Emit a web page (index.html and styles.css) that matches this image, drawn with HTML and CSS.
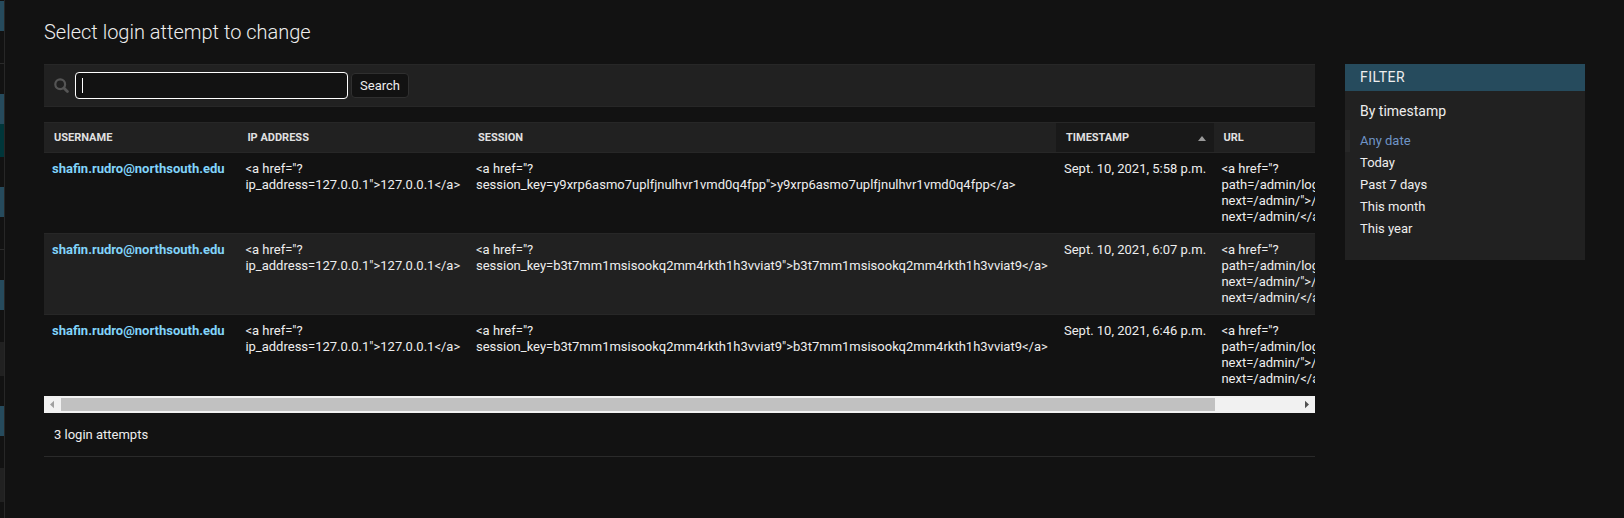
FILE: index.html
```html
<!DOCTYPE html>
<html lang="en">
<head>
<meta charset="utf-8">
<title>Select login attempt to change</title>
<link rel="stylesheet" href="styles.css">
</head>
<body>
<div class="layout">
  <nav class="sidebar">
    <div class="caption"></div>
    <div class="item tall"></div>
    <div class="item"></div>
    <div class="caption"></div>
    <div class="item current"></div>
    <div class="item"></div>
    <div class="caption"></div>
    <div class="item tall"></div>
    <div class="item"></div>
    <div class="caption"></div>
    <div class="item gap"></div>
    <div class="item alt"></div>
    <div class="item"></div>
    <div class="caption"></div>
    <div class="item gap"></div>
    <div class="item alt"></div>
  </nav>
  <main class="content">
    <h1>Select login attempt to change</h1>
    <div class="columns">
      <div class="changelist">
        <form class="toolbar">
          <svg class="loupe" viewBox="0 0 15 15"><circle cx="6.2" cy="6.2" r="4.9" fill="none" stroke="#555" stroke-width="2.2"/><path d="M9.9 9.9L13.4 13.4" stroke="#555" stroke-width="2.8" stroke-linecap="round"/></svg>
          <div class="searchbar"><span class="caret"></span></div>
          <button type="button">Search</button>
        </form>
        <div class="results">
          <table>
            <colgroup><col class="c-user"><col class="c-ip"><col class="c-session"><col class="c-time"><col class="c-url"></colgroup>
            <thead><tr><th>Username</th><th>IP address</th><th>Session</th><th class="sorted"><div class="sort"><span>Timestamp</span><i class="arrow"></i></div></th><th>URL</th></tr></thead>
            <tbody>
              <tr><th>shafin.rudro@northsouth.edu</th><td>&lt;a href="?<br>ip_address=127.0.0.1"&gt;127.0.0.1&lt;/a&gt;</td><td>&lt;a href="?<br>session_key=y9xrp6asmo7uplfjnulhvr1vmd0q4fpp"&gt;y9xrp6asmo7uplfjnulhvr1vmd0q4fpp&lt;/a&gt;</td><td>Sept. 10, 2021, 5:58 p.m.</td><td>&lt;a href="?<br>path=/admin/login/?<br>next=/admin/"&gt;/admin/login/?<br>next=/admin/&lt;/a&gt;</td></tr>
              <tr><th>shafin.rudro@northsouth.edu</th><td>&lt;a href="?<br>ip_address=127.0.0.1"&gt;127.0.0.1&lt;/a&gt;</td><td>&lt;a href="?<br>session_key=b3t7mm1msisookq2mm4rkth1h3vviat9"&gt;b3t7mm1msisookq2mm4rkth1h3vviat9&lt;/a&gt;</td><td>Sept. 10, 2021, 6:07 p.m.</td><td>&lt;a href="?<br>path=/admin/login/?<br>next=/admin/"&gt;/admin/login/?<br>next=/admin/&lt;/a&gt;</td></tr>
              <tr><th>shafin.rudro@northsouth.edu</th><td>&lt;a href="?<br>ip_address=127.0.0.1"&gt;127.0.0.1&lt;/a&gt;</td><td>&lt;a href="?<br>session_key=b3t7mm1msisookq2mm4rkth1h3vviat9"&gt;b3t7mm1msisookq2mm4rkth1h3vviat9&lt;/a&gt;</td><td>Sept. 10, 2021, 6:46 p.m.</td><td>&lt;a href="?<br>path=/admin/login/?<br>next=/admin/"&gt;/admin/login/?<br>next=/admin/&lt;/a&gt;</td></tr>
            </tbody>
          </table>
        </div>
        <div class="scrollbar">
          <svg class="step" viewBox="0 0 17 17"><path d="M10 4.8V12.2L6 8.5Z" fill="#a0a0a0"/></svg>
          <div class="thumb"></div>
          <svg class="step" viewBox="0 0 17 17"><path d="M7 4.8V12.2L11 8.5Z" fill="#505050"/></svg>
        </div>
        <p class="paginator">3 login attempts</p>
      </div>
      <aside class="filter">
        <h2>Filter</h2>
        <h3>By timestamp</h3>
        <ul>
          <li class="selected">Any date</li>
          <li>Today</li>
          <li>Past 7 days</li>
          <li>This month</li>
          <li>This year</li>
        </ul>
      </aside>
    </div>
  </main>
</div>
</body>
</html>
```
FILE: styles.css
```css
* { box-sizing: border-box; }
body {
  margin: 0;
  background: #121212;
  color: #eee;
  font: 13px/16px Roboto, "Liberation Sans", sans-serif;
}
.layout { display: flex; height: 518px; overflow: hidden; }
.sidebar {
  width: 5px;
  flex: none;
  padding-top: 1px;
  border-right: 1px solid #272727;
  overflow: hidden;
}
.caption { height: 30px; background: #264b5d; }
.item { height: 30px; }
.tall { height: 33px; border-bottom: 1px solid #2a2a2a; }
.current { height: 33px; background: #00363a; }
.alt { height: 34px; background: #212121; }
.gap { height: 32px; }
.content { flex: 1; padding: 20px 39px 0 39px; min-width: 0; }
h1 {
  margin: 0 0 20px;
  font-size: 20px;
  line-height: 24px;
  font-weight: 300;
}
.columns { display: flex; gap: 30px; align-items: flex-start; }
.changelist { width: 1271px; flex: none; }
.toolbar {
  display: flex;
  align-items: center;
  height: 43px;
  margin: 0 0 15px;
  padding-left: 10px;
  background: #212121;
  border-top: 1px solid #272727;
  border-bottom: 1px solid #272727;
}
.loupe { width: 15px; height: 15px; margin-right: 6px; }
.searchbar {
  display: flex;
  align-items: center;
  width: 273px;
  height: 27px;
  padding-left: 6px;
  background: #121212;
  border: 1px solid #fff;
  border-radius: 4px;
}
.caret { width: 1px; height: 15px; background: #fff; }
.toolbar button {
  width: 58px;
  height: 25px;
  margin-left: 3px;
  padding: 0;
  background: #121212;
  border: 1px solid #2f2f2f;
  border-radius: 4px;
  color: #eee;
  font: 13px/16px Roboto, sans-serif;
}
.results { overflow: hidden; }
table { width: 1450px; table-layout: fixed; border-collapse: separate; border-spacing: 0; }
.c-user { width: 194px; }
.c-ip { width: 230px; }
.c-session { width: 588px; }
.c-time { width: 158px; }
th, td { padding: 8px; text-align: left; vertical-align: top; white-space: nowrap; }
thead th {
  height: 31px;
  padding: 7px 10px;
  background: #212121;
  border-top: 1px solid #272727;
  border-bottom: 1px solid #272727;
  color: #e0e0e0;
  font-size: 11px;
  line-height: 15px;
  text-transform: uppercase;
}
thead .sorted { background: #191919; padding-right: 8px; }
thead th:nth-child(2), thead th:last-child { padding-left: 9.4px; }
td:nth-child(2), td:last-child { padding-left: 7.4px; }
.sort { display: flex; justify-content: space-between; }
.arrow {
  margin-top: 6px;
  height: 5px;
  border: solid transparent;
  border-width: 0 4.5px 5px;
  border-bottom-color: #999;
}
tbody th, tbody td { height: 81px; border-bottom: 1px solid #272727; }
tbody tr:last-child > * { border-bottom-color: transparent; }
tbody tr:nth-child(even) { background: #212121; }
tbody th { color: #81d4fa; }
.scrollbar { display: flex; align-items: center; height: 17px; background: #f1f1f1; }
.step { width: 17px; height: 17px; flex: none; }
.thumb { width: 1154px; height: 13px; margin-right: auto; background: #c1c1c1; }
.paginator {
  height: 44px;
  margin: 0;
  padding: 14px 10px 0;
  border-bottom: 1px solid #2a2a2a;
}
.filter { width: 240px; height: 196px; background: #212121; }
h2 {
  margin: 0;
  padding: 0 15px;
  height: 27px;
  background: #264b5d;
  font-size: 14px;
  line-height: 27px;
  font-weight: 400;
  letter-spacing: .5px;
  text-transform: uppercase;
}
h3 { margin: 12px 0 11px; padding: 0 15px; font-size: 14px; line-height: 16px; font-weight: 400; }
ul { margin: 0; padding: 0; list-style: none; }
li { height: 22px; padding-left: 15px; line-height: 22px; }
.selected { padding-left: 10px; border-left: 5px solid #272727; color: #6f94c6; }
```
